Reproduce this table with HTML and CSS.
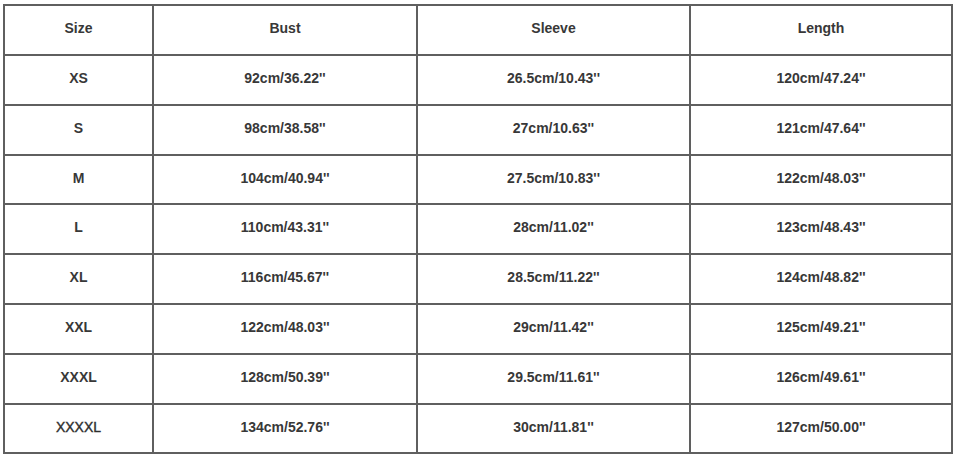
FILE: index.html
```html
<!DOCTYPE html>
<html>
<head>
<meta charset="utf-8">
<link rel="stylesheet" href="styles.css">
</head>
<body>
<div class="chart">
  <div class="cell">Size</div><div class="cell">Bust</div><div class="cell">Sleeve</div><div class="cell">Length</div>
  <div class="cell">XS</div><div class="cell">92cm/36.22''</div><div class="cell">26.5cm/10.43''</div><div class="cell">120cm/47.24''</div>
  <div class="cell">S</div><div class="cell">98cm/38.58''</div><div class="cell">27cm/10.63''</div><div class="cell">121cm/47.64''</div>
  <div class="cell">M</div><div class="cell">104cm/40.94''</div><div class="cell">27.5cm/10.83''</div><div class="cell">122cm/48.03''</div>
  <div class="cell">L</div><div class="cell">110cm/43.31''</div><div class="cell">28cm/11.02''</div><div class="cell">123cm/48.43''</div>
  <div class="cell">XL</div><div class="cell">116cm/45.67''</div><div class="cell">28.5cm/11.22''</div><div class="cell">124cm/48.82''</div>
  <div class="cell">XXL</div><div class="cell">122cm/48.03''</div><div class="cell">29cm/11.42''</div><div class="cell">125cm/49.21''</div>
  <div class="cell">XXXL</div><div class="cell">128cm/50.39''</div><div class="cell">29.5cm/11.61''</div><div class="cell">126cm/49.61''</div>
  <div class="cell thin">XXXXL</div><div class="cell">134cm/52.76''</div><div class="cell">30cm/11.81''</div><div class="cell">127cm/50.00''</div>
</div>
</body>
</html>
```
FILE: styles.css
```css
html, body {
  margin: 0;
  padding: 0;
  background: #ffffff;
}
body {
  padding: 4px 0 0 3px;
  font-family: "Liberation Sans", Arial, sans-serif;
}
.chart {
  display: grid;
  grid-template-columns: 147px 262px 271px 260px;
  grid-template-rows: 48px 48px 48px 47px 48px 48px 48px 48px 47px;
  gap: 2px;
  padding: 2px;
  background: #5f5f5f;
  width: max-content;
}
.cell {
  background: #ffffff;
  display: flex;
  align-items: center;
  justify-content: center;
  padding-bottom: 4px;
  font-size: 14px;
  font-weight: bold;
  color: #383838;
}
.cell.thin {
  font-weight: normal;
  color: #2e2e2e;
  -webkit-text-stroke: 0.4px #2e2e2e;
}
```
